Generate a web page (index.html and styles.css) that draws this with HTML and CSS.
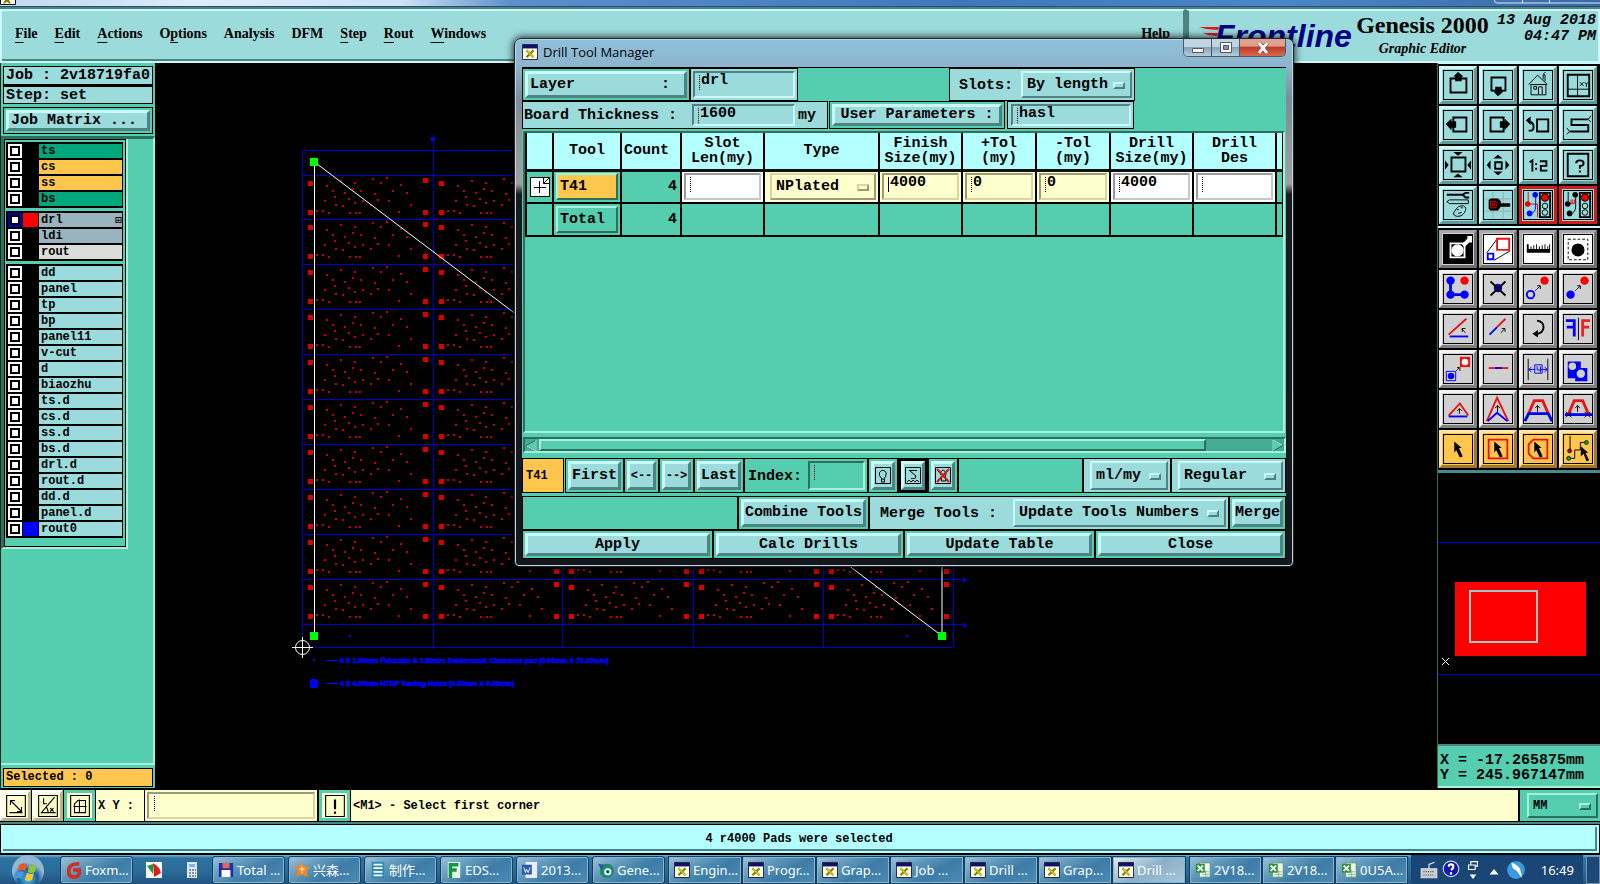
FILE: index.html
```html
<!DOCTYPE html>
<html lang="en">
<head>
<meta charset="utf-8">
<title>Graphic Editor</title>
<link rel="stylesheet" href="styles.css">
</head>
<body>
<div class="screen">
  <div class="os-title">
    <svg width="16" height="6" viewBox="0 10 16 6"><path d="M.5 0h15v14.500H.500z" fill="#fffff0" stroke="#101020"/><path d="M4 13l6-7M10 13L4 6" stroke="#888000" stroke-width="2"/></svg>
    <svg width="106" height="4" viewBox="0 0 106 4"><path d="M.5 0v1q0 2 3 2H106M28.500 0v3M55.500 0v3" fill="none" stroke="#dce8f4"/></svg>
  </div>

  <header class="top">
    <nav class="menu">
      <a href="#"><u>F</u>ile</a><a href="#"><u>E</u>dit</a><a href="#"><u>A</u>ctions</a><a href="#">O<u>p</u>tions</a><a href="#">Analysis</a><a href="#">DFM</a><a href="#"><u>S</u>tep</a><a href="#"><u>R</u>out</a><a href="#"><u>W</u>indows</a><a href="#" class="help">Help</a>
    </nav>
    <div class="brand">
      <div class="logo">
        <svg width="24" height="24" viewBox="0 0 24 24"><path d="M2 2h20l-1 3-12-1zM6 8h15l-1 3-9-1zM0 14h19l-2 4-9-1z" fill="#e8141c"/></svg>
        <span>Frontline</span>
      </div>
      <div class="product"><strong>Genesis 2000</strong><em>Graphic Editor</em></div>
      <div class="date">13 Aug 2018<br>04:47 PM</div>
    </div>
  </header>

  <main class="work">
    <aside class="side">
      <div class="info">Job : 2v18719fa0</div>
      <div class="info">Step: set</div>
      <div class="framed"><button class="btn left">Job Matrix ...</button></div>
      <div class="layers">
        <div class="layer-list">
          <ul>
            <li class="green"><input type="checkbox" aria-label="ts"><i></i><span>ts</span></li>
            <li class="amber"><input type="checkbox" aria-label="cs"><i></i><span>cs</span></li>
            <li class="amber"><input type="checkbox" aria-label="ss"><i></i><span>ss</span></li>
            <li class="green"><input type="checkbox" aria-label="bs"><i></i><span>bs</span></li>
          </ul>
          <ul>
            <li class="slate on"><input type="checkbox" aria-label="drl" checked><i class="red"></i><span>drl<b>⊞</b></span></li>
            <li class="slate"><input type="checkbox" aria-label="ldi"><i></i><span>ldi</span></li>
            <li class="grey"><input type="checkbox" aria-label="rout"><i></i><span>rout</span></li>
          </ul>
          <ul>
            <li><input type="checkbox" aria-label="dd"><i></i><span>dd</span></li>
            <li><input type="checkbox" aria-label="panel"><i></i><span>panel</span></li>
            <li><input type="checkbox" aria-label="tp"><i></i><span>tp</span></li>
            <li><input type="checkbox" aria-label="bp"><i></i><span>bp</span></li>
            <li><input type="checkbox" aria-label="panel11"><i></i><span>panel11</span></li>
            <li><input type="checkbox" aria-label="v-cut"><i></i><span>v-cut</span></li>
            <li><input type="checkbox" aria-label="d"><i></i><span>d</span></li>
            <li><input type="checkbox" aria-label="biaozhu"><i></i><span>biaozhu</span></li>
            <li><input type="checkbox" aria-label="ts.d"><i></i><span>ts.d</span></li>
            <li><input type="checkbox" aria-label="cs.d"><i></i><span>cs.d</span></li>
            <li><input type="checkbox" aria-label="ss.d"><i></i><span>ss.d</span></li>
            <li><input type="checkbox" aria-label="bs.d"><i></i><span>bs.d</span></li>
            <li><input type="checkbox" aria-label="drl.d"><i></i><span>drl.d</span></li>
            <li><input type="checkbox" aria-label="rout.d"><i></i><span>rout.d</span></li>
            <li><input type="checkbox" aria-label="dd.d"><i></i><span>dd.d</span></li>
            <li><input type="checkbox" aria-label="panel.d"><i></i><span>panel.d</span></li>
            <li><input type="checkbox" aria-label="rout0"><i class="blue"></i><span>rout0</span></li>
          </ul>
        </div>
      </div>
      <div class="selected">Selected : 0</div>
    </aside>

    <section class="canvas">
      <svg width="1282" height="727" viewBox="155 63 1282 727">
        <defs>
          <g id="cell" fill="#d80000">
            <path d="M6 6h5v5h-5zM6 35h5v5h-5zM121 3h5v5h-5zM121 35h5v5h-5z"/>
            <path d="M24 11h2M38 6h2M52 8h2M70 4h2M78 8h2M84 3h2M98 10h2M20 36h2M30 16h2M32 22h2M42 18h2M46 24h2M50 14h2M58 16h2M72 19h2M75 25h2M90 16h2M104 18h2M22 26h2M33 30h2M40 31h2M52 28h2M60 26h2M68 30h2M86 26h2M26 38h2M47 38h2M53 38h2M57 38h2M96 37h2M14 36h2M108 30h2" stroke="#c80000" stroke-width="2"/>
          </g>
          <g id="row"><use href="#cell" x="302"/><use href="#cell" x="433"/><use href="#cell" x="563"/><use href="#cell" x="693"/><use href="#cell" x="823"/></g>
        </defs>
        <g fill="none" stroke="#0000c8">
          <path d="M302.500 150.500h651v497h-651zM433.500 140v507M562.500 150v497M693.500 150v497M823.500 150v497"/>
          <path d="M302 175.500h651M302 219.500h651M302 264.500h651M302 309.500h651M302 354.500h651M302 399.500h651M302 444.500h651M302 489.500h651M302 534.500h651M302 579.500h660M302 624.500h660"/>
        </g>
        <use href="#row" y="175"/><use href="#row" y="219"/><use href="#row" y="264"/><use href="#row" y="309"/><use href="#row" y="354"/><use href="#row" y="399"/><use href="#row" y="444"/><use href="#row" y="489"/><use href="#row" y="534"/><use href="#row" y="579"/>
        <path d="M314.500 636V162L942 636V162" fill="none" stroke="#fff"/>
        <path d="M310 158h8v8h-8zM310 632h8v8h-8zM938 632h8v8h-8z" fill="#00ff00"/>
        <g stroke="#fff" fill="none"><circle cx="302.500" cy="647.500" r="7"/><path d="M292 647.500h21M302.500 637v21"/></g>
        <path d="M431 137h4v4h-4zM963 577l4 4-4 1zM963 622l4 4-4 1zM349 635h2v2h-2zM906 635h2v2h-2zM313 659h2v2h-2z" fill="#00f"/>
        <rect x="310" y="679" width="8" height="9" rx="2" fill="#00f"/>
        <path d="M326 660.500h12M326 683.500h12" stroke="#00f"/>
        <g class="note"><text x="340" y="663">8 X 1.00mm Fiducials &amp; 3.00mm Soldermask Clearance pad (0.00mm X 70.00mm)</text><text x="340" y="686">4 X 4.00mm NTDP Tooling Holes (0.00mm X 0.00mm)</text></g>
      </svg>
    </section>

    <aside class="right">
      <div class="tools teal">
        <button aria-label="Pan up"><svg viewBox="0 0 30 30"><path class="k2" d="M7 8h17v15H7z"/><path class="kf" d="M15 1l6 5h-2v5h-7V6h-2z"/></svg></button>
        <button aria-label="Pan down"><svg viewBox="0 0 30 30"><path class="k2" d="M8 7h15v14H8z"/><path class="kf" d="M15 27l6-5h-2v-5h-7v5h-2z"/></svg></button>
        <button aria-label="Home"><svg viewBox="0 0 30 30"><path class="k" d="M5 14.500L14.500 4.500 25 14.500M7.500 14v11.500h16V14M7 14.500h17M10.500 16.500h3v3h-3zM15.500 25v-8h4v8M20.500 9V4h2v7M21 3l2-2"/></svg></button>
        <button aria-label="Window XY"><svg viewBox="0 0 30 30"><path class="k2" d="M4 4h23v23H4z"/><path class="k" d="M14.500 4v23M4 19.500h23M17 12l4 4M21 12l-4 4M22 12l2 2 2-2M24 14v3"/></svg></button>
        <button aria-label="Pan left"><svg viewBox="0 0 30 30"><path class="k2" d="M10 7h14v15H10z"/><path class="kf" d="M2 14l6-6v3h5v7H8v3z"/></svg></button>
        <button aria-label="Pan right"><svg viewBox="0 0 30 30"><path class="k2" d="M7 7h14v15H7z"/><path class="kf" d="M28 14l-6-6v3h-5v7h5v3z"/></svg></button>
        <button aria-label="Previous view"><svg viewBox="0 0 30 30"><path class="k2" d="M14 9h12v13H14zM5 21h3q3-1 2-6-1-3-5-4"/><path class="kf" d="M2 10l5-4v9z"/></svg></button>
        <button aria-label="Route view"><svg viewBox="0 0 30 30"><path class="k2" d="M26 9H8v6h18v7H6"/><path class="k" d="M29 5l-3 4 3 3M3 18l3 4-3 3"/></svg></button>
        <button aria-label="Zoom out"><svg viewBox="0 0 30 30"><path class="k2" d="M8 7h15v15H8z"/><path class="kf" d="M10 1h10l-5 4zM10 28h10l-5-4zM1 10v10l4-5zM29 10v10l-4-5z"/></svg></button>
        <button aria-label="Zoom in"><svg viewBox="0 0 30 30"><path class="k2" d="M12 12h7v7h-7z"/><path class="kf" d="M15 4l5 4H10zM15 26l5-4H10zM3 15l4-5v10zM27 15l-4-5v10z"/></svg></button>
        <button aria-label="Scale"><svg viewBox="0 0 30 30"><path class="k2" d="M6 12l3-2v12M13 13v2M13 18v2M17 11h7v5h-6v5h7"/></svg></button>
        <button aria-label="Query"><svg viewBox="0 0 30 30"><path class="k2" d="M4 3h22v24H4zM13 13q0-3 4-3t4 3q0 3-4 3v3M17 21v2"/></svg></button>
        <button aria-label="Setup"><svg viewBox="0 0 30 30"><path class="k2" d="M3 4h17M27 2h-4l-3 2 3 3h4"/><path class="k" d="M3 11.500l3-2h20v4H6zM12 21q3-6 9-5 4 2 1 7-3 5-9 4-5-2-1-6zM14 20h2M18 18h2M15 24l4-1"/></svg></button>
        <button aria-label="Probe"><svg viewBox="0 0 30 30"><path d="M9.500 1v28M20.500 1v28M1 8.500h28M1 21.500h28" stroke="#9aa" fill="none"/><path class="kf" d="M5 10l2-2h8l3 3v2h10v4H18l-3 4H7l-2-2z"/><path d="M7 11h6v7H7zM9 13h2v3H9z" fill="none" stroke="#e00"/></svg></button>
        <button class="stop" aria-label="Net check on"><svg viewBox="0 0 30 30"><path d="M4.500 1v13h10v14" fill="none" stroke="#e00"/><circle cx="4" cy="14" r="3" fill="#e00"/><path d="M12.500 4v12q0 8-6 8" fill="none" stroke="#00f"/><circle cx="12" cy="4" r="3" fill="#00f"/><circle cx="6" cy="24" r="3" fill="#00f"/><path class="k2" d="M17 2h11v26H17z"/><circle cx="22.500" cy="7" r="4" fill="#e00" stroke="#000"/><circle cx="22.500" cy="16" r="3" class="k"/><circle cx="22.500" cy="23" r="3" class="k"/></svg></button>
        <button class="stop" aria-label="Net check off"><svg viewBox="0 0 30 30"><path class="k" d="M4.500 1v13M12.500 4v12q0 8-6 8"/><path d="M5 13.500h6M7.500 9v4M9.500 9v4M11.500 9v4" fill="none" stroke="#e00"/><circle cx="4" cy="14" r="3"/><circle cx="12" cy="4" r="3"/><circle cx="6" cy="24" r="3"/><path class="k2" d="M17 2h11v26H17z"/><circle cx="22.500" cy="7" r="4" fill="#e00" stroke="#000"/><circle cx="22.500" cy="16" r="3" class="k"/><circle cx="22.500" cy="23" r="3" class="k"/></svg></button>
      </div>
      <div class="tools gray">
        <button class="lit" aria-label="Reshape"><svg viewBox="0 0 30 30"><path class="kf" d="M0 0h30v30H0z"/><path d="M7 9h15v15H7z" fill="none" stroke="#fff" stroke-width="2"/><circle cx="14.500" cy="16.500" r="6.500" fill="#fff"/><path d="M19 10l6-6v-3h5v7h-3l-5 5z" fill="#fff"/></svg></button>
        <button class="lit" aria-label="Move scaled"><svg viewBox="0 0 30 30"><path class="k" d="M3 19L15 3M11 27l17-10"/><path class="r2" d="M14 4h13v12H14z"/><path class="b2" d="M4 20h6v6H4z"/></svg></button>
        <button class="lit" aria-label="Ruler"><svg viewBox="0 0 30 30"><path class="kf" d="M3 10h2v5h2v-3h1v3h2v-4h1v4h2v-5h1v5h2v-3h1v3h2v-4h1v4h2v-5h1v5h2v-3h1v3h1v-5h1v9H3z"/></svg></button>
        <button class="lit" aria-label="Select area"><svg viewBox="0 0 30 30"><path class="k" stroke-dasharray="3 2" d="M4.500 4.500h21v22h-21z"/><circle cx="15" cy="16" r="7"/></svg></button>

        <button aria-label="Chain"><svg viewBox="0 0 30 30"><path class="b3" d="M7 6v15h15"/><g fill="#00f"><circle cx="7" cy="6" r="4.500"/><circle cx="7" cy="21" r="4.500"/><circle cx="22" cy="21" r="4.500"/></g><circle cx="22" cy="6" r="4.500" fill="#f00"/></svg></button>
        <button aria-label="Delete"><svg viewBox="0 0 30 30"><circle cx="15" cy="14" r="4.500" fill="#00c"/><path class="k2" d="M7 7l16 15M23 7L7 22"/></svg></button>
        <button aria-label="Copy"><svg viewBox="0 0 30 30"><circle class="b2" cx="7" cy="21" r="4"/><circle cx="22" cy="6" r="4.500" fill="#f00"/><path class="k" d="M12 17l5-5M14 11.500h3.500V15"/></svg></button>
        <button aria-label="Move"><svg viewBox="0 0 30 30"><circle cx="7" cy="21" r="4.500" fill="#00f"/><circle cx="22" cy="6" r="4.500" fill="#f00"/><path class="k" d="M12 17l5-5M14 11.500h3.500V15"/></svg></button>

        <button aria-label="Rotate"><svg viewBox="0 0 30 30"><path class="b2" d="M6 23h20"/><path class="r2" d="M5 21L24 4"/><path class="k" d="M23 19l-4-4M19.500 18v-3.500H23"/></svg></button>
        <button aria-label="Stretch"><svg viewBox="0 0 30 30"><path class="b2" d="M6 21l8-8"/><path class="r2" d="M14 13l9-9"/><path class="k" d="M18 19l4-4M19 14.500h3.500V18"/></svg></button>
        <button aria-label="Undo"><svg viewBox="0 0 30 30"><path class="k2" d="M14 6q7 1 7 7 0 6-9 8"/><path class="kf" d="M9 20l6-4v8z"/></svg></button>
        <button aria-label="Mirror"><svg viewBox="0 0 30 30"><path d="M2 6h9v17M3 13h8" fill="none" stroke="#00f" stroke-width="3"/><path d="M28 6h-8v17M27 13h-7" fill="none" stroke="#e22" stroke-width="3"/><path class="k" d="M15.500 3v24"/></svg></button>

        <button aria-label="Replace"><svg viewBox="0 0 30 30"><path d="M17 2h11v11H17z" fill="#e11"/><circle cx="22.500" cy="7.500" r="3.500" fill="#fff"/><path d="M2.500 17.500h10v10h-10z" fill="none" stroke="#00f"/><circle cx="7.500" cy="22.500" r="3.500" fill="#00f"/><path class="k" d="M13 17l3-3M14 13.500h3V17"/></svg></button>
        <button aria-label="Break"><svg viewBox="0 0 30 30"><path class="r2" d="M5 14h21"/><path class="b2" d="M12 14h7"/></svg></button>
        <button aria-label="Distance"><svg viewBox="0 0 30 30"><path class="k" d="M4.500 4v23M25.500 4v23"/><path d="M5 15.500h7M18 15.500h7M8 13l-3 2.500L8 18M22 13l3 2.500L22 18M11.500 10.500h8v9h-8zM14 12v4h4M17.500 12v7" fill="none" stroke="#00f"/></svg></button>
        <button aria-label="Surface"><svg viewBox="0 0 30 30"><path d="M4 7h14v7h7v14H12v-3H4z" fill="#00e"/><circle cx="9" cy="12" r="4" fill="#d0d0d0"/><circle cx="18" cy="20" r="4.500" fill="#d0d0d0"/></svg></button>

        <button aria-label="Angle low"><svg viewBox="0 0 30 30"><path class="r2" d="M5 22L17 9l9 13"/><path class="b2" d="M5 23h20"/><path class="k" d="M16.500 20v-5M14 17l2.500-2.500L19 17"/></svg></button>
        <button aria-label="Angle high"><svg viewBox="0 0 30 30"><path class="r2" d="M3 28L14 3l12 25"/><path class="b2" d="M4 28l10-9 11 9"/><path class="k" d="M14.500 18v-7M12 14l2.500-2.500L17 14"/></svg></button>
        <button aria-label="Trapezoid"><svg viewBox="0 0 30 30"><path class="r3" d="M5 20l6-14h9l6 14"/><path class="b3" d="M1 28l4-8h21l4 8"/><path class="k" d="M14.500 18v-7M12 14l2.500-2.500L17 14"/></svg></button>
        <button aria-label="Trapezoid cut"><svg viewBox="0 0 30 30"><path class="r3" d="M5 20l6-14h9l6 14"/><path class="b3" d="M1 21h29"/><path class="k" d="M14.500 18v-7M12 14l2.500-2.500L17 14M2 18l6 6M8 18l-6 6M22 18l6 6M28 18l-6 6"/></svg></button>

        <button class="amber" aria-label="Select single"><svg viewBox="0 0 30 30"><path class="kf" d="M11 7l8 7h-3l4 9-3 1-4-8-2 3z"/></svg></button>
        <button class="amber" aria-label="Select rectangle"><svg viewBox="0 0 30 30"><path class="r2" d="M5 5h20v20H5z"/><path class="kf" d="M11 7l8 7h-3l4 9-3 1-4-8-2 3z"/></svg></button>
        <button class="amber" aria-label="Select polygon"><svg viewBox="0 0 30 30"><path class="r2" d="M10 5h15v20H10l-5-5V10z"/><path class="kf" d="M11 7l8 7h-3l4 9-3 1-4-8-2 3z"/></svg></button>
        <button class="amber" aria-label="Select net"><svg viewBox="0 0 30 30"><path class="k" d="M6.500 1v15M6 25h5.500v-9h6V8H24"/><circle cx="6" cy="17" r="2" fill="#e00" stroke="#000"/><circle cx="5" cy="25" r="2" fill="#0c0" stroke="#000"/><circle cx="24" cy="8" r="2" fill="#0c0" stroke="#000"/><path class="kf" d="M18 12l8 7h-3l4 8-3 1-3-8-3 3z"/></svg></button>
      </div>
      <div class="overview">
        <svg width="163" height="273" viewBox="1438 473 163 273"><path d="M1438 542.500h162M1438 674.500h162" stroke="#0000c8"/><path d="M1455 582h131v74h-131z" fill="#f00"/><path d="M1470 591h67v51h-67z" fill="none" stroke="#9cc8c8" stroke-width="2"/><path d="M1442 658l7 7M1449 658l-7 7" stroke="#fff"/></svg>
      </div>
      <div class="coords">X = -17.265875mm<br>Y = 245.967147mm</div>
    </aside>
  </main>

  <div class="command">
    <button class="cmd" aria-label="Snap line"><svg viewBox="0 0 18 20"><path class="k" d="M.5.5h17v19H.500zM4 5l10 10M4 9V5h4M14 11v4h-4M3 16h12"/></svg></button>
    <button class="cmd" aria-label="Snap angle"><svg viewBox="0 0 18 20"><path class="k" d="M.5.5h17v19H.500zM15 2L3 16h13M5 3v5h3M9 16q0-4-2-5M11 12l3 3M14 12l-3 3"/></svg></button>
    <button class="cmd held" aria-label="Grid"><svg viewBox="0 0 18 20"><path class="k" d="M.5.5h17v19H.500zM4 8l3-3h7v11H4zM8.500 4v12M3 10.500h12"/></svg></button>
    <label for="xy">X Y :</label>
    <div class="field cream"><input id="xy" type="text"></div>
    <button class="cmd held" aria-label="Alert"><svg viewBox="0 0 18 20"><path class="k" d="M.5.5h17v19H.500z"/><path class="k2" d="M9 4v9M9 15v2"/></svg></button>
    <p>&lt;M1&gt; - Select first corner</p>
    <div class="unit"><div class="drop green"><select aria-label="Units"><option>MM</option></select></div></div>
  </div>
  <div class="status"><p>4 r4000 Pads were selected</p></div>

  <footer class="taskbar">
    <button class="orb" aria-label="Start"><svg width="36" height="32" viewBox="0 0 36 32"><defs><radialGradient id="orb" cx=".5" cy=".75"><stop offset="0" stop-color="#4cc4f0"/><stop offset=".6" stop-color="#1d5d98"/><stop offset="1" stop-color="#8fb8d4"/></radialGradient></defs><circle cx="18" cy="17" r="16" fill="url(#orb)"/><path d="M9 11q4-3 8-1l-2 7q-3-2-7 0z" fill="#e8582a"/><path d="M19 11q4 2 8 0l-2 7q-4 2-7 0z" fill="#8cc43c"/><path d="M7 19q4-3 7-1l-2 7q-3-2-7 0z" fill="#3f9be8"/><path d="M17 19q4 2 7 0l-2 7q-4 2-7 0z" fill="#f8c828"/></svg></button>
    <button class="task"><svg viewBox="0 0 18 18"><path d="M15 2Q3 2 3 10q0 7 6 7 7 0 6-8H8" fill="none" stroke="#d42a20" stroke-width="4"/></svg>Foxm...</button>
    <button class="pin" aria-label="Drawing"><svg viewBox="0 0 18 18"><path d="M1 1h16v16H1z" fill="#fff"/><path d="M2 5l6-2v10z" fill="#1d9a3c"/><path d="M8 2q7 4 8 10l-7 4z" fill="#d82020"/></svg></button>
    <button class="pin" aria-label="Calculator"><svg viewBox="0 0 18 18"><path d="M4 1h10v16H4z" fill="#dfe9f2"/><path d="M6 3h6v3H6z" fill="#7fb6dc"/><path d="M6 9h7M6 12h7M6 15h7" stroke="#8094a8" stroke-dasharray="2 1" stroke-width="2"/></svg></button>
    <button class="task"><svg viewBox="0 0 18 18"><path d="M1 1h16v16H1z" fill="#1a2fa8"/><path d="M5 1h8v6H5z" fill="#e86060"/><path d="M4 9h10v8H4z" fill="#fff"/></svg>Total ...</button>
    <button class="task"><svg viewBox="0 0 18 18"><path d="M9 0l3 5 6 1-4 4 2 7-7-3-7 3 2-7-4-4 6-1z" fill="#f0861c"/><path d="M6 8h6M9 5v8" stroke="#fff"/></svg>兴森...</button>
    <button class="task"><svg viewBox="0 0 18 18"><path d="M2 0h14v18H2z" fill="#2c8ab4"/><path d="M4 3h10M4 7h10M4 11h10M4 15h10" stroke="#fff" stroke-width="2"/></svg>制作...</button>
    <button class="task"><svg viewBox="0 0 18 18"><path d="M2 0h14v18H2z" fill="#e8f4ea"/><path d="M5 18V3h9M5 9h7" stroke="#13964a" stroke-width="4" fill="none"/></svg>EDS...</button>
    <button class="task"><svg viewBox="0 0 18 18"><path d="M4 0h13v18H4z" fill="#e8eefa"/><path d="M0 3h11v11H0z" fill="#2a58a8"/><path d="M2 6l2 6 1-4 2 4 2-6" stroke="#fff" fill="none"/></svg>2013...</button>
    <button class="task"><svg viewBox="0 0 18 18"><circle cx="10" cy="10" r="8" fill="#1c8a6c"/><circle cx="11" cy="11" r="4" fill="#fff"/><circle cx="11" cy="11" r="2" fill="#124a9c"/><path d="M0 2l7 1-3 6z" fill="#2a58a8"/></svg>Gene...</button>
    <div class="stack x">
      <button class="task"><svg viewBox="0 0 18 18"><use href="#xwin"/></svg>Engin...</button>
      <button class="task"><svg viewBox="0 0 18 18"><use href="#xwin"/></svg>Progr...</button>
      <button class="task"><svg viewBox="0 0 18 18"><use href="#xwin"/></svg>Grap...</button>
      <button class="task"><svg viewBox="0 0 18 18"><use href="#xwin"/></svg>Job ...</button>
      <button class="task"><svg viewBox="0 0 18 18"><use href="#xwin"/></svg>Drill ...</button>
      <button class="task"><svg viewBox="0 0 18 18"><use href="#xwin"/></svg>Grap...</button>
      <button class="task active"><svg viewBox="0 0 18 18"><use href="#xwin"/></svg>Drill ...</button>
    </div>
    <div class="stack">
      <button class="task"><svg viewBox="0 0 18 18"><use href="#sheet"/></svg>2V18...</button>
      <button class="task"><svg viewBox="0 0 18 18"><use href="#sheet"/></svg>2V18...</button>
      <button class="task"><svg viewBox="0 0 18 18"><use href="#sheet"/></svg>0U5A...</button>
    </div>
    <div class="tray">
      <svg viewBox="0 0 16 18"><path d="M1 8h14v8H1zM8 8V4l5-2" fill="none" stroke="#eee"/><path d="M1 8h14v8H1z" fill="#c8ccd0"/><path d="M3 10.500h10M3 13.500h10" stroke="#555" stroke-dasharray="1 1"/></svg>
      <svg viewBox="0 0 16 18"><circle cx="8" cy="8" r="7" fill="#1818a8" stroke="#c8d8f0"/><path d="M6 6q0-2 2-2t2 2-2 3M8 11v2" fill="none" stroke="#fff" stroke-width="2"/></svg>
      <svg viewBox="0 0 16 18"><path d="M4 4.500h6v4H4zM6 4V1.500h6v4h-2" fill="none" stroke="#fff"/><path d="M5 13h6l-3 4z" fill="#fff"/></svg>
      <svg viewBox="0 0 16 18"><path d="M4 13h8L8 8z" fill="#fff"/></svg>
      <svg viewBox="0 0 16 18"><circle cx="8" cy="9" r="8" fill="#3a9be0"/><path d="M4 2q0 6 4 7l5 7q0-8-4-11z" fill="#fff"/></svg>
      <time>16:49</time>
    </div>
    <button class="peek" aria-label="Show desktop"></button>
  </footer>
</div>

<svg class="defs" width="0" height="0"><defs>
  <g id="xwin"><path d="M.5.5h17v17H.500z" fill="#fffff0" stroke="#101020"/><path d="M1 1h16v4H1z" fill="#10106c"/><path d="M5 7l8 8M13 7l-8 8" stroke="#888000" stroke-width="2.500"/><path d="M5 7l8 8" stroke="#d8d020" stroke-width="1.500"/></g>
  <g id="sheet"><path d="M5 1h12v16H5z" fill="#eef6ee" stroke="#6a9a6a"/><path d="M8 11h8M8 14h8M12 9v8" stroke="#8ab88a"/><path d="M1 2h10v10H1z" fill="#2f8f3f"/><path d="M3 4l6 6M9 4l-6 6" stroke="#fff" stroke-width="2"/></g>
</defs></svg>

<div class="window" role="dialog" aria-labelledby="wt">
  <div class="titlebar">
    <svg width="16" height="16" viewBox="0 0 18 18"><use href="#xwin"/></svg>
    <h1 id="wt">Drill Tool Manager</h1>
    <div class="winbtns">
      <button aria-label="Minimize"><svg width="12" height="12" viewBox="0 0 12 12"><path d="M.5 6.500h11v4H.500z" fill="#fff" stroke="#556"/></svg></button>
      <button aria-label="Maximize"><svg width="12" height="12" viewBox="0 0 12 12"><path d="M.5.5h11v10H.500z" fill="#fff" stroke="#556"/><path d="M3.500 3.500h5v4h-5z" fill="#7c98b0" stroke="#556"/></svg></button>
      <button class="x" aria-label="Close window"><svg width="12" height="12" viewBox="0 0 12 12"><path d="M2 1l8 10M10 1L2 11" stroke="#622" stroke-width="4"/><path d="M2 1l8 10M10 1L2 11" stroke="#fff" stroke-width="3"/></svg></button>
    </div>
  </div>
  <div class="body">
    <div class="line r1">
      <div class="framed w-layer"><button class="btn spread"><span>Layer</span><span>:</span></button></div>
      <div class="framed teal w-drl"><div class="field"><input type="text" value="drl" aria-label="Layer"></div></div>
      <div class="grow"></div>
      <div class="framed teal w-slots"><label for="slots">Slots:</label><div class="drop"><select id="slots"><option>By length</option></select></div></div>
      <div class="w-end"></div>
    </div>
    <div class="line r2">
      <div class="framed teal w-board"><label for="thick">Board Thickness :</label><div class="field"><input id="thick" type="text" value="1600"></div><span>my</span></div>
      <div class="framed w-user"><button class="btn">User Parameters :</button></div>
      <div class="framed teal w-hasl"><div class="field"><input type="text" value="hasl" aria-label="User parameters"></div></div>
      <div class="w-end"></div>
    </div>
    <div class="sheet">
      <table>
        <colgroup><col class="c1"><col class="c2"><col class="c3"><col class="c4"><col class="c5"><col class="c4"><col class="c6"><col class="c6"><col class="c4"><col class="c4"><col class="c7"></colgroup>
        <thead><tr><th></th><th>Tool</th><th class="tight">Count</th><th>Slot<br>Len(my)</th><th>Type</th><th>Finish<br>Size(my)</th><th>+Tol<br>(my)</th><th>-Tol<br>(my)</th><th>Drill<br>Size(my)</th><th>Drill<br>Des</th><th></th></tr></thead>
        <tbody>
          <tr>
            <td><button class="expand" aria-label="Expand T41"><svg width="20" height="20" viewBox="0 0 20 20"><path d="M.5.500h19v19H.500z" fill="#fff" stroke="#000"/><path class="k" d="M4 10.500h12M9.500 4v12M13.500.500v6h6M13.500 6.500l6-6"/></svg></button></td>
            <td><button class="btn left amber">T41</button></td>
            <td class="num">4</td>
            <td class="white"><div class="field white"><input type="text" aria-label="Slot length"></div></td>
            <td class="cream"><div class="drop cream"><select aria-label="Type"><option>NPlated</option></select></div></td>
            <td class="cream"><div class="field cream solid"><input type="text" value="4000" aria-label="Finish size"></div></td>
            <td class="cream"><div class="field cream"><input type="text" value="0" aria-label="Plus tolerance"></div></td>
            <td class="cream"><div class="field cream"><input type="text" value="0" aria-label="Minus tolerance"></div></td>
            <td class="white"><div class="field white"><input type="text" value="4000" aria-label="Drill size"></div></td>
            <td class="white"><div class="field white"><input type="text" aria-label="Drill designator"></div></td>
            <td></td>
          </tr>
          <tr><td></td><td><button class="btn left green">Total</button></td><td class="num">4</td><td></td><td></td><td></td><td></td><td></td><td></td><td></td><td></td></tr>
        </tbody>
      </table>
    </div>
    <div class="scroll">
      <svg width="12" height="13" viewBox="0 0 12 13"><path d="M11 1v11L1 6.500z" fill="#54ceaf" stroke="#2c6f5e"/><path d="M11 1v11L2 7" fill="none" stroke="#a8f0dc"/></svg>
      <div class="track"><div class="thumb"></div></div>
      <svg width="12" height="13" viewBox="0 0 12 13"><path d="M1 1v11l10-5.500z" fill="#54ceaf" stroke="#2c6f5e"/><path d="M1 12V1l9 5" fill="none" stroke="#a8f0dc"/></svg>
    </div>
    <div class="line r3">
      <div class="framed tag">T41</div>
      <div class="framed w-first"><button class="btn">First</button></div>
      <div class="framed w-arrow"><button class="btn">&lt;--</button></div>
      <div class="framed w-arrow"><button class="btn">--&gt;</button></div>
      <div class="framed w-last"><button class="btn">Last</button></div>
      <div class="framed w-index"><label for="idx">Index:</label><div class="field green"><input id="idx" type="text"></div></div>
      <div class="framed w-ico"><button class="btn" aria-label="Highlight"><svg width="16" height="18" viewBox="0 0 16 18"><path class="k" d="M.5.5h15v16H.500zM6.500 11.500q-3-3-2-6 2-3 4-2 4 1 2 6l-2 3zM6.500 12v3h3v-3"/></svg></button></div>
      <div class="framed w-ico on"><button class="btn" aria-label="Path"><svg width="16" height="18" viewBox="0 0 16 18"><path class="k" d="M.5.5h15v16H.500zM12 3.500H4.500L11 9l-1 2.500H6M2 15l2-2 2 2 2-2 2 2 2-2 2 2"/></svg></button></div>
      <div class="framed w-ico"><button class="btn" aria-label="Clear"><svg width="16" height="18" viewBox="0 0 16 18"><path class="k" d="M.5.5h15v16H.500zM5.500 8q-1-4 3-5 4 2 2 6v5h-4v-5"/><path d="M2 2l12 13M14 2L2 15" stroke="#d01818" stroke-width="2"/></svg></button></div>
      <div class="framed grow"></div>
      <div class="framed teal w-unit"><div class="drop"><select aria-label="Tool units"><option>ml/my</option></select></div></div>
      <div class="framed teal w-reg"><div class="drop"><select aria-label="Tool set"><option>Regular</option></select></div></div>
    </div>
    <div class="line r4">
      <div class="framed grow"></div>
      <div class="framed w-comb"><button class="btn">Combine Tools</button></div>
      <div class="framed teal w-merge"><label for="merge">Merge Tools :</label><div class="drop"><select id="merge"><option>Update Tools Numbers</option></select></div></div>
      <div class="framed w-mbtn"><button class="btn">Merge</button></div>
    </div>
    <div class="line r5">
      <div class="framed"><button class="btn">Apply</button></div>
      <div class="framed"><button class="btn">Calc Drills</button></div>
      <div class="framed"><button class="btn">Update Table</button></div>
      <div class="framed"><button class="btn">Close</button></div>
    </div>
  </div>
</div>
</body>
</html>
```

FILE: styles.css
```css
:root {
  --green: #54ceaf;
  --green-hi: #a8f0dc;
  --green-lo: #2c6f5e;
  --teal: #9cdbdb;
  --teal-hi: #cbf8f8;
  --teal-lo: #4f8383;
  --amber: #ffc64d;
  --cream: #ffffcd;
  --aqua: #b4ffff;
  --mono: "Liberation Mono", "Courier New", monospace;
}
*, *::before, *::after { box-sizing: border-box; }
body { margin: 0; background: #000; color: #000; font: bold 15px/16px var(--mono); overflow: hidden; }
button, input, select { font: inherit; color: inherit; margin: 0; padding: 0; border: 0; background: none; border-radius: 0; }
p, h1, ul { margin: 0; padding: 0; }
input[type="text"] { width: 100%; outline: 0; display: block; height: 16px; }
select { appearance: none; width: 100%; }
.k { fill: none; stroke: #000; stroke-width: 1; }
.k2 { fill: none; stroke: #000; stroke-width: 2; }
.r2 { fill: none; stroke: #e81414; stroke-width: 2; }
.b2 { fill: none; stroke: #00f; stroke-width: 2; }
.r3 { fill: none; stroke: #e81414; stroke-width: 3; }
.b3 { fill: none; stroke: #00f; stroke-width: 3; }
.defs { position: absolute; }

.screen { display: flex; flex-direction: column; height: 100vh; }
.os-title { display: flex; justify-content: space-between; align-items: flex-start; height: 7px; border-bottom: 1px solid #24506a; background: linear-gradient(90deg, #c0d8f0 0, #dcecfa 12%, #d0e4f8 25%, #5b8fce 32%, #3f78bc 60%, #4a86c8 80%, #3a6aa8 100%); }

.top { display: flex; height: 56px; background: var(--teal); border-top: 2px solid var(--teal-lo); }
.menu { flex: 1; display: flex; align-items: center; gap: 17px; padding: 0 13px 4px; font: bold 14px/18px "Liberation Serif", serif; border: 2px solid var(--teal-hi); border-right: 2px solid var(--teal-lo); border-bottom: 2px solid var(--teal-hi); box-shadow: inset 0 -2px var(--teal-lo); }
.menu a { color: #000; text-decoration: none; }
.menu u { text-underline-offset: 4px; text-decoration-thickness: 1px; }
.help { margin-left: auto; }
.brand { display: flex; width: 415px; padding-right: 2px; border: 2px solid var(--teal-hi); border-left: 4px solid var(--teal-lo); }
.logo { display: flex; width: 164px; padding: 11px 0 0 8px; }
.logo svg { flex: none; margin-top: 3px; }
.logo span { margin-left: -6px; color: #000084; font: italic bold 32px/28px "Liberation Sans", sans-serif; }
.product { flex: 1; display: flex; flex-direction: column; align-items: center; font-family: "Liberation Serif", serif; white-space: nowrap; }
.product strong { font-size: 24px; line-height: 28px; }
.product em { font-size: 14px; line-height: 20px; }
.date { width: 104px; text-align: right; font-style: italic; padding-top: 2px; white-space: nowrap; }

.work { flex: 1; display: flex; min-height: 0; border-left: 1px solid #222; background: #000; }
.side { width: 154px; display: flex; flex-direction: column; padding: 3px 2px 1px; background: var(--green); margin-bottom: 2px; }
.info { height: 19px; border: 1px solid #000; background: var(--teal); padding: 1px 2px; white-space: nowrap; }
.info + .info { border-top-width: 2px; }
.framed { border: 1px solid #000; background: var(--green); display: flex; min-width: 0; }
.side > .framed { margin-top: 3px; height: 27px; padding: 2px; }
.btn { flex: 1; width: 100%; background: var(--teal); border: 3px solid; border-color: var(--teal-hi) var(--teal-lo) var(--teal-lo) var(--teal-hi); white-space: nowrap; text-align: center; }
.btn.left { text-align: left; padding-left: 2px; }
.btn.amber { background: var(--amber); }
.btn.green { background: var(--green); }
.btn.amber, .btn.green { border-color: var(--green-hi) var(--green-lo) var(--green-lo) var(--green-hi); border-width: 2px; }
.layers { flex: 1; margin: 2px -2px 0; border-top: 3px solid var(--green-lo); border-right: 2px solid var(--green-hi); border-bottom: 2px solid var(--green-hi); }
.layer-list { width: 127px; border-left: 3px solid var(--green-lo); border-right: 2px solid var(--green-hi); border-bottom: 2px solid var(--green-hi); padding: 3px 4px 9px 2px; box-shadow: inset 0 0 0 1px #000; display: flex; flex-direction: column; gap: 3px; font-size: 12px; line-height: 14px; }
.layer-list ul { list-style: none; background: #000; padding: 1px 1px 1px 2px; width: 117px; }
.layer-list li { display: flex; align-items: center; height: 16px; }
.layer-list input { appearance: none; width: 14px; height: 14px; border: 2px solid #fff; background: #fff; box-shadow: inset 0 0 0 2px #000; }
.layer-list .on input { border-color: #0000b0; }
.layer-list i { width: 15px; height: 14px; margin: 0 1px; }
.layer-list i.red { background: #f00; }
.layer-list i.blue { background: #00f; }
.layer-list span { flex: 1; height: 14px; padding-left: 2px; background: var(--teal); display: flex; justify-content: space-between; }
.layer-list b { font-family: "DejaVu Sans", sans-serif; font-size: 9px; }
.green > span { background: #00a67c; }
.amber > span { background: var(--amber); }
.slate > span { background: #9ab4bf; }
.grey > span { background: #dcdcdc; }
.layer-list .green > span { background: #00a67c; }
.layer-list .amber > span { background: var(--amber); }
.layer-list .slate > span { background: #9ab4bf; }
.layer-list .grey > span { background: #dcdcdc; }
.selected { margin-top: 3px; height: 19px; border: 1px solid #000; background: var(--amber); font-size: 12px; padding-left: 2px; }

.canvas { flex: 1; min-width: 0; overflow: hidden; background: #000; }
.canvas svg, .overview svg { display: block; }
.note { fill: #00f; stroke: #00f; stroke-width: .5; font: bold 7px "Liberation Sans", sans-serif; }

.right { width: 163px; display: flex; flex-direction: column; border-left: 1px solid var(--green-lo); margin-bottom: 2px; }
.tools { display: grid; grid-template-columns: repeat(4, 1fr); gap: 2px; padding: 2px 3px 2px 1px; background: #000; }
.tools.teal { border-top: 1px solid var(--teal-hi); border-bottom: 2px solid var(--teal-hi); }
.tools.gray { border-bottom: 3px solid #4a8a8a; }
.tools button { height: 38px; display: flex; align-items: center; justify-content: center; background: var(--teal); border: 3px solid; border-color: var(--teal-hi) #63989a #63989a var(--teal-hi); }
.tools svg { width: 30px; height: 30px; border: 1px solid #000; flex: none; }
.tools.gray button { background: #d0d0d0; border-color: #f2f2f2 #808080 #808080 #f2f2f2; }
.tools.gray .lit svg { background: #fff; }
.tools.gray .lit { border-color: #a8a8a8 #707070 #707070 #a8a8a8; }
.tools.gray .amber { background: var(--amber); border-color: #ffe6a8 #9c7a30 #9c7a30 #ffe6a8; }
.tools .stop { border-color: #d01c1c; }
.overview { flex: 1; min-height: 0; overflow: hidden; background: #000; }
.coords { height: 44px; border-top: 2px solid var(--teal-lo); border-bottom: 2px solid var(--green-hi); background: var(--green); padding: 7px 2px 0; line-height: 15px; white-space: nowrap; }

.command { display: flex; height: 33px; background: #000; padding-bottom: 2px; font-size: 12px; }
.cmd { width: 31px; margin-right: 1px; background: var(--cream); border: 3px solid; border-color: #fff #b8b48c #b8b48c #fff; display: flex; align-items: center; justify-content: center; }
.cmd svg { width: 20px; height: 22px; flex: none; }
.cmd.held { outline: 3px solid var(--green); outline-offset: -3px; }
.command label { background: var(--cream); width: 48px; padding: 8px 2px; white-space: nowrap; }
.command > .field { flex: none; width: 172px; border: 0; background: var(--cream); padding: 2px; margin: 0 2px 0 1px; }
.command > .field::before { left: 9px; top: 6px; }
.command > .field input { height: 27px; border: 2px solid; border-color: #9c9a78 #d8d6a4 #d8d6a4 #9c9a78; padding-left: 10px; }
.command p { flex: 1; background: var(--cream); padding: 8px 2px; }
.unit { display: flex; width: 80px; margin-left: 2px; padding: 3px 2px 3px 7px; background: var(--green); }
.unit .drop { flex: 1; }
.status { height: 30px; margin: 1px 0; padding: 2px; border: 1px solid #000; background: var(--aqua); box-shadow: 0 -2px var(--teal-lo); font-size: 12px; }
.status p { height: 24px; padding: 4px; border-bottom: 2px solid var(--teal-lo); border-right: 2px solid var(--teal-lo); text-align: center; }

.field { position: relative; flex: 1; min-width: 0; border: 2px solid; border-color: var(--teal-lo) var(--teal-hi) var(--teal-hi) var(--teal-lo); padding-left: 6px; }
.field::before { content: ""; position: absolute; left: 4px; top: 2px; height: 15px; border-left: 1px dotted #000; }
.field.solid::before { border-left-style: solid; }
.field.green { background: var(--green); border-color: var(--green-lo) var(--green-hi) var(--green-hi) var(--green-lo); }
.field.cream { border-color: #9c9a78 #d8d6a4 #d8d6a4 #9c9a78; }
.field.white { border-color: #9a9a9a #c8c8c8 #c8c8c8 #9a9a9a; }
.drop { position: relative; display: flex; border: 2px solid; border-color: var(--teal-hi) var(--teal-lo) var(--teal-lo) var(--teal-hi); }
.drop select { padding-left: 4px; height: 100%; }
.drop::after { content: ""; position: absolute; right: 5px; top: calc(50% - 3px); width: 12px; height: 7px; border: 2px solid; border-color: var(--teal-hi) var(--teal-lo) var(--teal-lo) var(--teal-hi); pointer-events: none; }
.drop.green, .drop.green::after { border-color: var(--green-hi) var(--green-lo) var(--green-lo) var(--green-hi); }
.drop.cream, .drop.cream::after { border-color: #d8d6a4 #9c9a78 #9c9a78 #d8d6a4; }

.window { position: absolute; left: 514px; top: 38px; width: 780px; padding: 0 7px 7px; border: 1px solid #202830; border-radius: 7px 7px 5px 5px; background: linear-gradient(180deg, #8fc0dc 0, #8db4cc 28px, #7c8c98 60px, #a0a0a0 145px, #181c20 155px, #14181c 100%); box-shadow: inset 0 0 0 1px #c4d4dc, 0 0 8px #000; }
.titlebar { display: flex; height: 28px; align-items: center; }
.titlebar > svg, .titlebar h1 { margin-bottom: 3px; }
.titlebar h1 { flex: 1; margin-left: 5px; font: 13px/18px "Open Sans", sans-serif; }
.winbtns { display: flex; align-self: flex-start; width: 103px; height: 18px; border: 1px solid #4a5a66; border-top: 0; border-radius: 0 0 5px 5px; overflow: hidden; }
.winbtns button { flex: 28; display: flex; align-items: center; justify-content: center; background: linear-gradient(#c0d4e2 0 45%, #86a4ba 50%, #b4cede); border-right: 1px solid #4a5a66; }
.winbtns .x { flex: 46; border: 0; background: linear-gradient(#e0a090 0 40%, #c03a28 50%, #d86a50); }
.body { display: flex; flex-direction: column; background: var(--green); border-top: 1px solid #000; }
.line { display: flex; }
.line > .framed { padding: 2px; align-items: stretch; }
.teal.framed { background: var(--teal); }
.grow { flex: 1; }
.spread { display: flex; justify-content: space-between; align-items: center; padding: 0 14px 0 2px; }
.r1 { height: 33px; }
.r2 { height: 28px; gap: 1px; }
.w-layer { width: 168px; }
.w-drl { width: 108px; }
.w-slots { width: 186px; }
.w-slots label { padding: 7px 8px 0 7px; }
.w-slots .drop { flex: 1; }
.w-end { width: 151px; }
.w-board { flex: 1; }
.line > .w-board { padding-left: 1px; }
.w-board label { padding: 4px 15px 0 0; white-space: nowrap; }
.w-board span { padding: 4px 9px 0 3px; }
.w-user { width: 176px; }
.line > .w-hasl { width: 127px; margin-left: 1px; padding-left: 3px; }
.sheet { height: 302px; margin: 2px 1px 0 1px; border: 2px solid; border-color: var(--green-lo) var(--green-hi) var(--green-hi) var(--green-lo); overflow: hidden; }
table { width: 100%; table-layout: fixed; border-collapse: collapse; }
.c1 { width: 27px; } .c2 { width: 68px; } .c3 { width: 60px; } .c4 { width: 83px; } .c5 { width: 115px; } .c6 { width: 74px; } .c7 { width: 7px; }
th, td { padding: 0; border: 2px solid #000; overflow: hidden; }
th { height: 37px; line-height: 15px; background: var(--aqua); border-top: 0; border-bottom: 3px solid #111; white-space: nowrap; }
th.tight { text-align: left; padding-left: 2px; }
td { height: 33px; }
td .btn { height: 27px; width: 62px; display: block; margin: 0 auto; }
td.num { text-align: right; padding-right: 3px; }
td.cream { background: var(--cream); }
td.white { background: #fff; }
td .field { height: 27px; margin: 0 2px; }
td .drop { height: 27px; margin: 0 2px 0 5px; }
.expand { display: block; margin: 0 auto; height: 20px; }
.scroll { display: flex; align-items: center; height: 16px; margin: 4px 0 5px 1px; border: 2px solid; border-color: var(--green-lo) var(--green-hi) var(--green-hi) var(--green-lo); background: #44ac94; }
.track { flex: 1; height: 12px; padding-left: 2px; }
.thumb { width: 91%; height: 12px; background: var(--green); border: 2px solid; border-color: var(--green-hi) var(--green-lo) var(--green-lo) var(--green-hi); }
.r3 { height: 35px; }
.r3 > .tag { width: 42px; align-items: center; font-size: 12px; background: var(--amber); padding: 0 3px; margin-right: 1px; }
.w-first { width: 59px; }
.w-arrow { width: 35px; font-size: 12px; }
.w-last { width: 50px; }
.w-index { width: 124px; }
.w-index label { padding: 8px 6px 0 1px; }
.w-ico { width: 30px; }
.w-ico.on { background: #000; }
.w-ico .btn { display: flex; align-items: center; justify-content: center; }
.w-ico svg { flex: none; }
.w-unit { width: 88px; }
.w-reg { width: 115px; }
.line > .w-unit, .line > .w-reg { padding-left: 6px; }
.w-unit .drop, .w-reg .drop { flex: 1; }
.r4 { height: 34px; margin-top: 3px; }
.w-comb { width: 131px; }
.w-merge { width: 360px; }
.w-merge label { flex: 1; padding: 7px 0 0 8px; white-space: nowrap; }
.w-merge .drop { width: 213px; }
.w-mbtn { width: 57px; }
.r5 { height: 29px; }
.r5 > .framed { flex: 1; }

.taskbar { display: flex; align-items: center; gap: 3px; height: 29px; background: linear-gradient(180deg, #7ab0d0 0, #2d73a0 3px, #2a6a98 60%, #205480 100%); color: #fff; font: 13px/20px "Noto Sans", "Noto Sans CJK SC", sans-serif; }
.orb { width: 50px; padding-left: 10px; margin-right: 7px; height: 32px; }
.orb svg { display: block; }
.task { flex: 0 1 73px; width: 73px; min-width: 0; height: 28px; display: flex; align-items: center; gap: 3px; padding: 0 3px 0 5px; overflow: hidden; white-space: nowrap; border: 1px solid #16405f; border-radius: 3px; background: linear-gradient(150deg, #9cc2d8 0, #5c96ba 35%, #3c7ca8 60%, #4c8cb4 100%); box-shadow: inset 0 0 0 1px #88b4d0; }
.task svg { width: 16px; height: 18px; flex: none; }
.pin { width: 35px; display: flex; justify-content: center; }
.pin svg { width: 18px; height: 18px; }
.stack { display: flex; }
.stack .task { border-radius: 0; }
.stack.x .task { flex-basis: 74px; width: 74px; }
.task.active { background: linear-gradient(150deg, #e4eef4, #8cb0c8 50%, #a8c8da); }
.tray { flex: 1; display: flex; align-items: center; justify-content: space-between; padding: 0 9px; background: #1a4676; height: 100%; }
.tray svg { width: 18px; height: 20px; }
.tray time { margin-left: 12px; }
.peek { width: 14px; height: 28px; border: 1px solid #6f94b4; background: #1c4878; }
```
